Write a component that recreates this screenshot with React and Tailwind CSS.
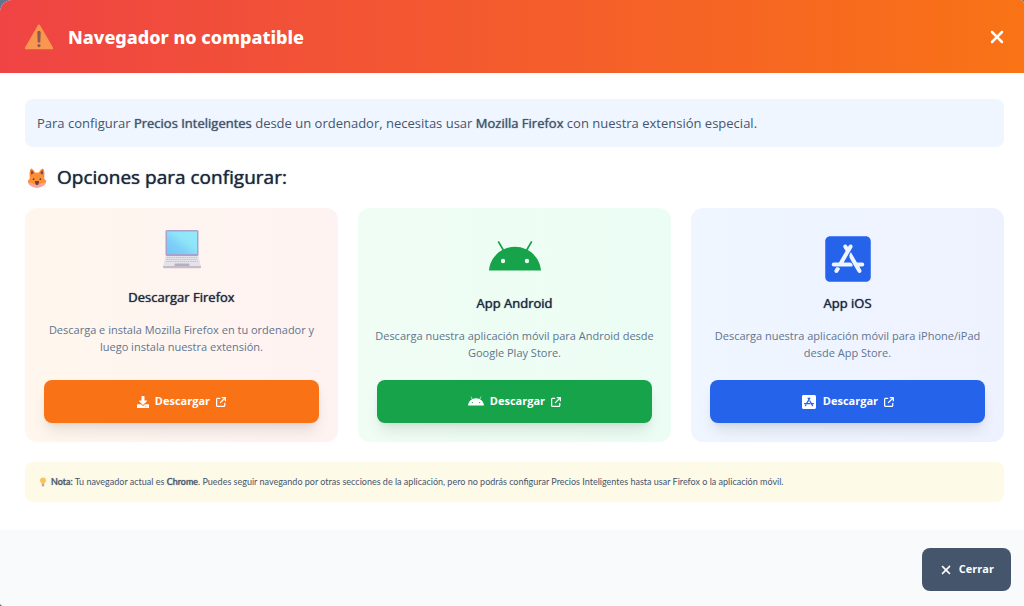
import React, { useState } from "react";
import { FaAndroid, FaAppStoreIos, FaDownload } from "react-icons/fa";
import { FaArrowUpRightFromSquare, FaXmark } from "react-icons/fa6";

const WarningIcon = () => (
  <svg viewBox="0 0 30 26" className="w-[30px] h-[26px] shrink-0" aria-hidden="true">
    <path d="M13.9 1.2a1.2 1.2 0 0 1 2.2 0L29 23.4c.5.9 0 1.8-1 1.8H2c-1 0-1.500-.9-1-1.800z" fill="#f9964f" />
    <path d="M13.300 8.500a1.700 1.700 0 0 1 3.400 0l-.4 10h-2.600z" fill="#8f5a4d" />
    <circle cx="15" cy="21.600" r="1.600" fill="#8f5a4d" />
  </svg>
);

const FoxIcon = () => (
  <svg viewBox="0 0 20 20" className="w-5 h-5 shrink-0" aria-hidden="true">
    <path d="M2.800 10C2.200 5 2.800 1.500 4.200.6 6 1.200 7.600 3.300 8.400 5.600h3.200C12.400 3.300 14 1.200 15.800.6c1.400.9 2 4.400 1.400 9.400z" fill="#f9873a" />
    <path d="M4.200 6.500c-.3-2 0-3.600.5-4.300 1 .8 1.800 2.200 2.300 3.800zM15.800 6.500c.3-2 0-3.600-.5-4.300-1 .8-1.800 2.200-2.300 3.800z" fill="#7a4358" />
    <path d="M10 4.600c4 0 6.600 2.400 7.200 6L19.300 13c-1 4-5 6.500-9.300 6.500S1.700 17 .7 13l2.100-2.400c.6-3.600 3.200-6 7.200-6z" fill="#fd8f35" />
    <path d="M1 14.800c3-.4 5.200.4 7 2h4c1.800-1.600 4-2.400 7-2-1.300 3.100-5.200 4.800-9 4.800s-7.700-1.700-9-4.800z" fill="#f3a6a4" />
    <path d="M8 13h4c.2 2-.8 4.200-2 4.200S7.800 15 8 13z" fill="#6b3f48" />
    <circle cx="6.600" cy="11.200" r=".9" fill="#5e3a48" />
    <circle cx="13.400" cy="11.200" r=".9" fill="#5e3a48" />
  </svg>
);

const LaptopIcon = () => (
  <svg viewBox="0 0 40 40" className="w-10 h-10" aria-hidden="true">
    <defs>
      <linearGradient id="screen" x1="0" y1="1" x2="1" y2="0">
        <stop offset="0" stopColor="#6fc6f8" />
        <stop offset=".35" stopColor="#80d0f8" />
        <stop offset=".6" stopColor="#8ee5f8" />
        <stop offset="1" stopColor="#93ebf8" />
      </linearGradient>
    </defs>
    <rect x="3.500" y="1" width="33" height="26" rx="1.500" fill="#a9a2cc" />
    <rect x="5" y="2.500" width="30" height="22.500" fill="url(#screen)" />
    <path d="M3.500 27h33l2.500 11H1z" fill="#e6e2ea" />
    <path d="M1 37h38v1.500a.8.8 0 0 1-.8.800H1.800a.8.8 0 0 1-.8-.8z" fill="#c3bec9" />
    <path d="M5 28.500h30M4.500 30.500h31M4 32.500h32" stroke="#c6c1cc" strokeWidth="1.100" strokeDasharray="1.500 .7" />
    <path d="M13 34.500h14l.7 2.500H12.300z" fill="#b5b0bb" />
  </svg>
);

const BulbIcon = () => (
  <svg viewBox="0 0 8 10" className="w-2 h-2.5 shrink-0" aria-hidden="true">
    <path d="M4 .5a3 3 0 0 1 3 3c0 1.600-1.400 2.200-1.600 3.500H2.600C2.400 5.700 1 5.100 1 3.500a3 3 0 0 1 3-3z" fill="#fdc35a" />
    <path d="M2.800 7h2.400v1.600L4.500 9.500h-1l-.7-.9z" fill="#b5a9a8" />
  </svg>
);

const Strong = ({ children }) => (
  <strong className="font-normal [text-shadow:0_0_1px_currentColor]">{children}</strong>
);

const options = [
  {
    title: "Descargar Firefox",
    text: "Descarga e instala Mozilla Firefox en tu ordenador y luego instala nuestra extensión.",
    icon: <LaptopIcon />,
    iconBox: "h-[60px] pt-0.5",
    buttonIcon: <FaDownload className="w-3 h-3" />,
    card: "from-[#fff7ed] to-[#fef2f2]",
    button: "bg-[#f97316] hover:bg-[#ea580c]",
  },
  {
    title: "App Android",
    text: "Descarga nuestra aplicación móvil para Android desde Google Play Store.",
    icon: <FaAndroid className="w-[52px] h-[52px] text-[#16a34a]" />,
    iconBox: "h-[66px] pt-1.5",
    buttonIcon: <FaAndroid className="w-4 h-4" />,
    card: "from-[#f0fdf4] to-[#ecfdf5]",
    button: "bg-[#16a34a] hover:bg-[#15803d]",
  },
  {
    title: "App iOS",
    text: "Descarga nuestra aplicación móvil para iPhone/iPad desde App Store.",
    icon: <FaAppStoreIos className="w-[52px] h-[52px] text-[#2563eb]" />,
    iconBox: "h-[66px] pt-1.5",
    buttonIcon: <FaAppStoreIos className="w-4 h-4" />,
    card: "from-[#eff6ff] to-[#eef2ff]",
    button: "bg-[#2563eb] hover:bg-[#1d4ed8]",
  },
];

export default function App() {
  const [open, setOpen] = useState(true);

  if (!open) return null;

  return (
    <div className="min-h-screen bg-slate-500 font-['Open_Sans',sans-serif]">
      <div
        role="dialog"
        aria-labelledby="dialog-title"
        className="min-h-screen flex flex-col bg-white rounded-tl-xl rounded-tr-sm rounded-bl-sm overflow-hidden"
      >
        <header className="flex items-center justify-between pl-6 pr-[17px] pt-[21px] pb-5 bg-linear-to-r/srgb from-[#ef4444] to-[#f97316] text-white">
          <div className="flex items-center gap-3.5">
            <WarningIcon />
            <h1 id="dialog-title" className="text-lg leading-8 font-extrabold font-['Noto_Sans',sans-serif]">
              Navegador no compatible
            </h1>
          </div>
          <button type="button" aria-label="Cerrar ventana" onClick={() => setOpen(false)}>
            <FaXmark className="w-5 h-5" />
          </button>
        </header>

        <main className="flex-1 pl-[25px] pr-5 pt-[26px] pb-7">
          <p className="px-3 py-3 rounded-lg bg-[#eff6ff] text-[13px] leading-6 text-slate-600">
            Para configurar <Strong>Precios Inteligentes</Strong> desde un ordenador, necesitas usar{" "}
            <Strong>Mozilla Firefox</Strong> con nuestra extensión especial.
          </p>

          <h2 className="mt-4 pl-0.5 flex items-center gap-2.5 text-[19px] leading-[29px] text-slate-800">
            <FoxIcon />
            <Strong>Opciones para configurar:</Strong>
          </h2>

          <div className="mt-4 grid grid-cols-3 gap-5">
            {options.map((option) => (
              <section
                key={option.title}
                className={`flex flex-col items-center rounded-xl bg-linear-to-r/srgb p-[19px] text-center ${option.card}`}
              >
                <div className={option.iconBox}>{option.icon}</div>
                <h3 className="text-[13px] leading-5 font-medium text-slate-800 [text-shadow:0_0_1px_currentColor]">
                  {option.title}
                </h3>
                <p className="mt-3.5 mb-[19px] -mx-2 text-[11px] leading-[17px] text-slate-500">
                  {option.text}
                </p>
                <button
                  type="button"
                  className={`mt-auto w-full h-[43px] flex items-center justify-center gap-1.5 rounded-lg text-[11px] font-bold text-white shadow-lg ${option.button}`}
                >
                  {option.buttonIcon}
                  Descargar
                  <FaArrowUpRightFromSquare className="w-2.5 h-2.5" />
                </button>
              </section>
            ))}
          </div>

          <p className="mt-5 flex items-center gap-1 px-3.5 py-3 rounded-lg bg-[#fefae8] text-[9px] leading-4 text-slate-600 font-[Lato,sans-serif]">
            <BulbIcon />
            <span>
              <Strong>Nota:</Strong> Tu navegador actual es <Strong>Chrome</Strong>. Puedes seguir
              navegando por otras secciones de la aplicación, pero no podrás configurar Precios
              Inteligentes hasta usar Firefox o la aplicación móvil.
            </span>
          </p>
        </main>

        <footer className="flex justify-end px-[13px] pt-[18px] pb-[15px] bg-[#f8fafc]">
          <button
            type="button"
            onClick={() => setOpen(false)}
            className="h-[43px] px-[17px] flex items-center gap-1.5 rounded-lg bg-slate-600 text-[11px] font-bold text-white hover:bg-slate-700"
          >
            <FaXmark className="w-3.5 h-3.5" />
            Cerrar
          </button>
        </footer>
      </div>
    </div>
  );
}
